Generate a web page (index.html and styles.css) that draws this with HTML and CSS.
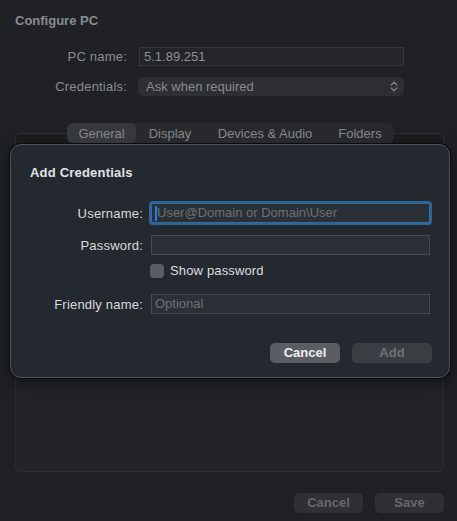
FILE: index.html
```html
<!DOCTYPE html>
<html>
<head>
<meta charset="utf-8">
<link rel="stylesheet" href="styles.css">
</head>
<body>
<div class="window">
  <div class="title">Configure PC</div>
  <div class="form">
    <div class="label">PC name:</div>
    <div class="field main-field">5.1.89.251</div>
    <div class="label">Credentials:</div>
    <div class="popup">
      <span>Ask when required</span>
      <svg class="chev" width="8" height="11" viewBox="0 0 8 11"><path d="M1.2 4 L4 1.3 L6.8 4 M1.2 7 L4 9.7 L6.8 7" fill="none" stroke="#7d7f82" stroke-width="1.3" stroke-linecap="round" stroke-linejoin="round"/></svg>
    </div>
  </div>
  <div class="tabwrap">
    <div class="tabs">
      <div class="tab sel">General</div>
      <div class="tab">Display</div>
      <div class="tab">Devices &amp; Audio</div>
      <div class="tab">Folders</div>
    </div>
    <div class="tabbox"></div>
  </div>
  <div class="actions">
    <div class="btn dim">Cancel</div>
    <div class="btn dim">Save</div>
  </div>

  <div class="sheet">
    <div class="sheet-title">Add Credentials</div>
    <div class="sform">
      <div class="slabel">Username:</div>
      <div class="sfield focus"><span class="caret"></span><span class="ph">User@Domain or Domain\User</span></div>
      <div class="slabel r2">Password:</div>
      <div class="sfield r2"></div>
      <div class="r3"></div>
      <label class="check r3"><span class="box"></span><span>Show password</span></label>
      <div class="slabel r4">Friendly name:</div>
      <div class="sfield r4"><span class="ph">Optional</span></div>
    </div>
    <div class="sactions">
      <div class="sbtn cancel">Cancel</div>
      <div class="sbtn add">Add</div>
    </div>
  </div>
</div>
</body>
</html>
```

FILE: styles.css
```css
* { box-sizing: border-box; }
html, body {
  margin: 0;
  padding: 0;
  background: #1f2125;
  font-family: "Liberation Sans", Arial, sans-serif;
  font-size: 13px;
}
.window {
  position: relative;
  width: 457px;
  height: 521px;
  padding: 13px 13px 0 15px;
  color: #8b8d90;
}
.title {
  font-weight: 700;
  height: 16px;
  line-height: 16px;
  color: #8a8c8f;
}
.form {
  display: grid;
  grid-template-columns: 112px 266px;
  column-gap: 11px;
  row-gap: 11px;
  margin-top: 18px;
  align-items: center;
}
.label {
  text-align: right;
  color: #8a8c8f;
  letter-spacing: 0.2px;
}
.field {
  height: 19px;
  line-height: 17px;
  border: 1px solid #35373b;
  background: #232528;
  padding: 0 4px;
  color: #8f9194;
}
.main-field { margin-left: 1px; width: 265px; }
.popup {
  height: 19px;
  border-radius: 5px;
  background: #2d2f33;
  display: flex;
  align-items: center;
  justify-content: space-between;
  padding: 0 6px 0 8px;
  color: #8a8c8f;
}
.tabwrap {
  position: relative;
  margin-top: 27px;
}
.tabs {
  position: relative;
  z-index: 1;
  margin-left: 52px;
  width: 327px;
  height: 20px;
  display: flex;
  background: #27292c;
  border-radius: 6px;
}
.tab {
  line-height: 21px;
  text-align: center;
  color: #86888b;
  flex: none;
}
.tab:nth-child(1) { width: 69px; }
.tab:nth-child(2) { width: 68px; }
.tab:nth-child(3) { width: 122px; }
.tab:nth-child(4) { width: 68px; }
.tab.sel {
  background: #36383c;
  border-radius: 6px;
}
.tabbox {
  margin-top: -10px;
  width: 429px;
  height: 339px;
  border: 1px solid #2c2e31;
  border-radius: 5px;
  background: linear-gradient(#1b1c1e, #222428 45%, #222427);
}
.actions {
  display: flex;
  justify-content: flex-end;
  gap: 12px;
  margin-top: 21px;
  width: 429px;
}
.btn {
  width: 69px;
  height: 20px;
  line-height: 20px;
  text-align: center;
  background: #2e3034;
  border-radius: 5px;
  color: #66686b;
  font-weight: 700;
}

/* sheet */
.sheet {
  position: absolute;
  left: 10px;
  top: 144px;
  width: 440px;
  height: 234px;
  background: #242930;
  border: 1px solid #4f5459;
  border-radius: 11px;
  box-shadow: 0 0 0 1px #0b0c0e, 0 6px 18px rgba(0,0,0,0.5);
  padding: 20px 0 0 19px;
  color: #dcdcdd;
}
.sheet-title {
  font-weight: 700;
  height: 16px;
  line-height: 16px;
  color: #e2e3e4;
  letter-spacing: 0.2px;
}
.sform {
  display: grid;
  grid-template-columns: 113px 279px;
  column-gap: 8px;
  row-gap: 0;
  margin-top: 22px;
  align-items: center;
}
.r2 { margin-top: 12px; }
.r3 { margin-top: 9px; }
.r4 { margin-top: 16px; }
.slabel {
  text-align: right;
  color: #dadbdc;
  letter-spacing: 0.2px;
}
.sfield {
  height: 20px;
  line-height: 18px;
  background: #2b3036;
  border: 1px solid #454a50;
  padding: 0 3px;
  display: flex;
  align-items: center;
  white-space: nowrap;
}
.sfield.focus {
  border-color: #2d6fa5;
  box-shadow: 0 0 0 2px #2f6595;
  border-radius: 2px;
}
.caret {
  display: inline-block;
  width: 2px;
  height: 15px;
  background: #1b7ef2;
  margin-right: 0;
}
.ph { color: #6c7075; }
.check {
  display: flex;
  align-items: center;
  gap: 6px;
  height: 14px;
  line-height: 14px;
  margin-left: -1px;
  color: #dcdddf;
  letter-spacing: 0.15px;
}
.box {
  width: 14px;
  height: 14px;
  border-radius: 4px;
  background: #5a5e64;
}
.sactions {
  display: flex;
  justify-content: flex-end;
  gap: 12px;
  margin-top: 29px;
  width: 402px;
}
.sbtn {
  height: 20px;
  line-height: 20px;
  text-align: center;
  border-radius: 5px;
  font-weight: 700;
}
.sbtn.cancel {
  width: 70px;
  background: #5a5e63;
  color: #eeeeee;
}
.sbtn.add {
  width: 80px;
  background: #3a3e43;
  color: #6e7277;
}
```
